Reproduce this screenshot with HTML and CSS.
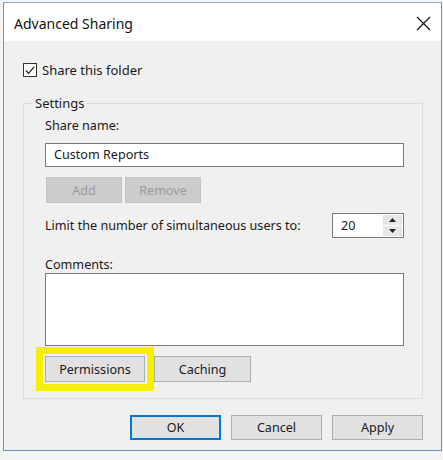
FILE: index.html
```html
<!DOCTYPE html>
<html>
<head>
<meta charset="utf-8">
<link rel="stylesheet" href="styles.css">
</head>
<body>
<div class="window">
  <div class="titlebar">
    <span class="title">Advanced Sharing</span>
    <svg class="close" width="15" height="15" viewBox="0 0 15 15"><path d="M1 1 L14 14 M14 1 L1 14" stroke="#111" stroke-width="1.2" fill="none"/></svg>
  </div>
  <div class="content">
    <div class="check-row">
      <span class="checkbox"><svg width="13" height="13" viewBox="0 0 13 13"><path d="M2 6.5 L5 9.5 L11 2.5" stroke="#222" stroke-width="1.3" fill="none"/></svg></span>
      <span>Share this folder</span>
    </div>
    <fieldset class="group">
      <legend>Settings</legend>
      <div class="label">Share name:</div>
      <div class="textbox">Custom Reports</div>
      <div class="btn-row">
        <span class="btn disabled">Add</span>
        <span class="btn disabled">Remove</span>
      </div>
      <div class="limit-row">
        <span>Limit the number of simultaneous users to:</span>
        <div class="spinner">
          <span class="spin-value">20</span>
          <span class="spin-btns">
            <span class="spin-up"><svg width="7" height="4" viewBox="0 0 7 4"><path d="M0 4 L3.5 0 L7 4 Z" fill="#222"/></svg></span>
            <span class="spin-down"><svg width="7" height="4" viewBox="0 0 7 4"><path d="M0 0 L3.5 4 L7 0 Z" fill="#222"/></svg></span>
          </span>
        </div>
      </div>
      <div class="label comments-label">Comments:</div>
      <div class="textarea"></div>
      <div class="btn-row lower">
        <span class="highlight"><span class="btn perm">Permissions</span></span>
        <span class="btn caching">Caching</span>
      </div>
    </fieldset>
    <div class="dialog-buttons">
      <span class="btn dlg default">OK</span>
      <span class="btn dlg">Cancel</span>
      <span class="btn dlg">Apply</span>
    </div>
  </div>
</div>
</body>
</html>
```
FILE: styles.css
```css
html, body {
  margin: 0;
  padding: 0;
  background: #f3f4f6;
}
body {
  font-family: "Noto Sans", "Open Sans", sans-serif;
  font-size: 12.6px;
  color: #1a1a1a;
}
.window {
  box-sizing: border-box;
  margin: 2px 0 0 3px;
  width: 439px;
  height: 449px;
  border: 1px solid #5f97d2;
  border-top-color: #8fa8c4;
  background: #f0f0f0;
}
.titlebar {
  height: 38px;
  background: #fff;
  display: flex;
  align-items: center;
  justify-content: space-between;
  padding: 0 10px 0 10px;
}
.title {
  font-size: 14px;
  color: #111;
  margin-top: 2px;
}
.close {
  margin-top: 3px;
}
.content {
  padding: 20px 18px 0 19px;
}
.check-row {
  display: flex;
  align-items: center;
  height: 18px;
  gap: 5px;
  font-size: 13px;
}
.checkbox {
  box-sizing: border-box;
  width: 14px;
  height: 14px;
  border: 1px solid #333;
  background: #fff;
  display: flex;
  align-items: center;
  justify-content: center;
}
.group {
  margin: 15px 0 0 0;
  padding: 5px 18px 7px 21px;
  border: 1px solid #dcdcdc;
  min-width: 0;
}
.group legend {
  padding: 0 2px;
  margin-left: -12px;
  line-height: 18px;
  font-size: 13px;
}
.label {
  line-height: 18px;
}
.textbox {
  box-sizing: border-box;
  margin-top: 8px;
  height: 24px;
  width: 359px;
  border: 1px solid #7a7a7a;
  background: #fff;
  padding: 0 8px;
  line-height: 22px;
}
.btn-row {
  display: flex;
  margin-top: 10px;
  gap: 3px;
  padding-left: 1px;
}
.btn {
  box-sizing: border-box;
  display: flex;
  align-items: center;
  justify-content: center;
  height: 26px;
  width: 76px;
  background: #e1e1e1;
  border: 1px solid #adadad;
}
.btn.disabled {
  background: #cccccc;
  border-color: #c4c4c4;
  color: #9a9a9a;
}
.limit-row {
  margin-top: 10px;
  display: flex;
  align-items: center;
  justify-content: space-between;
  width: 359px;
  height: 25px;
}
.spinner {
  box-sizing: border-box;
  display: flex;
  width: 72px;
  height: 25px;
  border: 1px solid #7a7a7a;
  background: #fff;
}
.spin-value {
  flex: 1;
  padding-left: 8px;
  line-height: 23px;
}
.spin-btns {
  display: flex;
  flex-direction: column;
  width: 19px;
  padding: 1px;
  gap: 1px;
}
.spin-up, .spin-down {
  flex: 1;
  background: #e6e6e6;
  display: flex;
  align-items: center;
  justify-content: center;
}
.comments-label {
  margin-top: 19px;
  line-height: 16px;
}
.textarea {
  box-sizing: border-box;
  height: 73px;
  width: 359px;
  border: 1px solid #7a7a7a;
  background: #fff;
}
.btn-row.lower {
  margin-top: 1px;
  margin-left: -9px;
  padding-left: 0;
  gap: 0;
  align-items: flex-start;
}
.highlight {
  display: flex;
  border: 7px solid #f7ef00;
  padding: 2px;
}
.btn.perm {
  width: 100px;
}
.btn.caching {
  width: 97px;
  margin-top: 9px;
}
.dialog-buttons {
  display: flex;
  justify-content: flex-end;
  gap: 10px;
  margin-top: 16px;
}
.btn.dlg {
  width: 91px;
  height: 25px;
}
.btn.default {
  border: 2px solid #0078d7;
}
```
